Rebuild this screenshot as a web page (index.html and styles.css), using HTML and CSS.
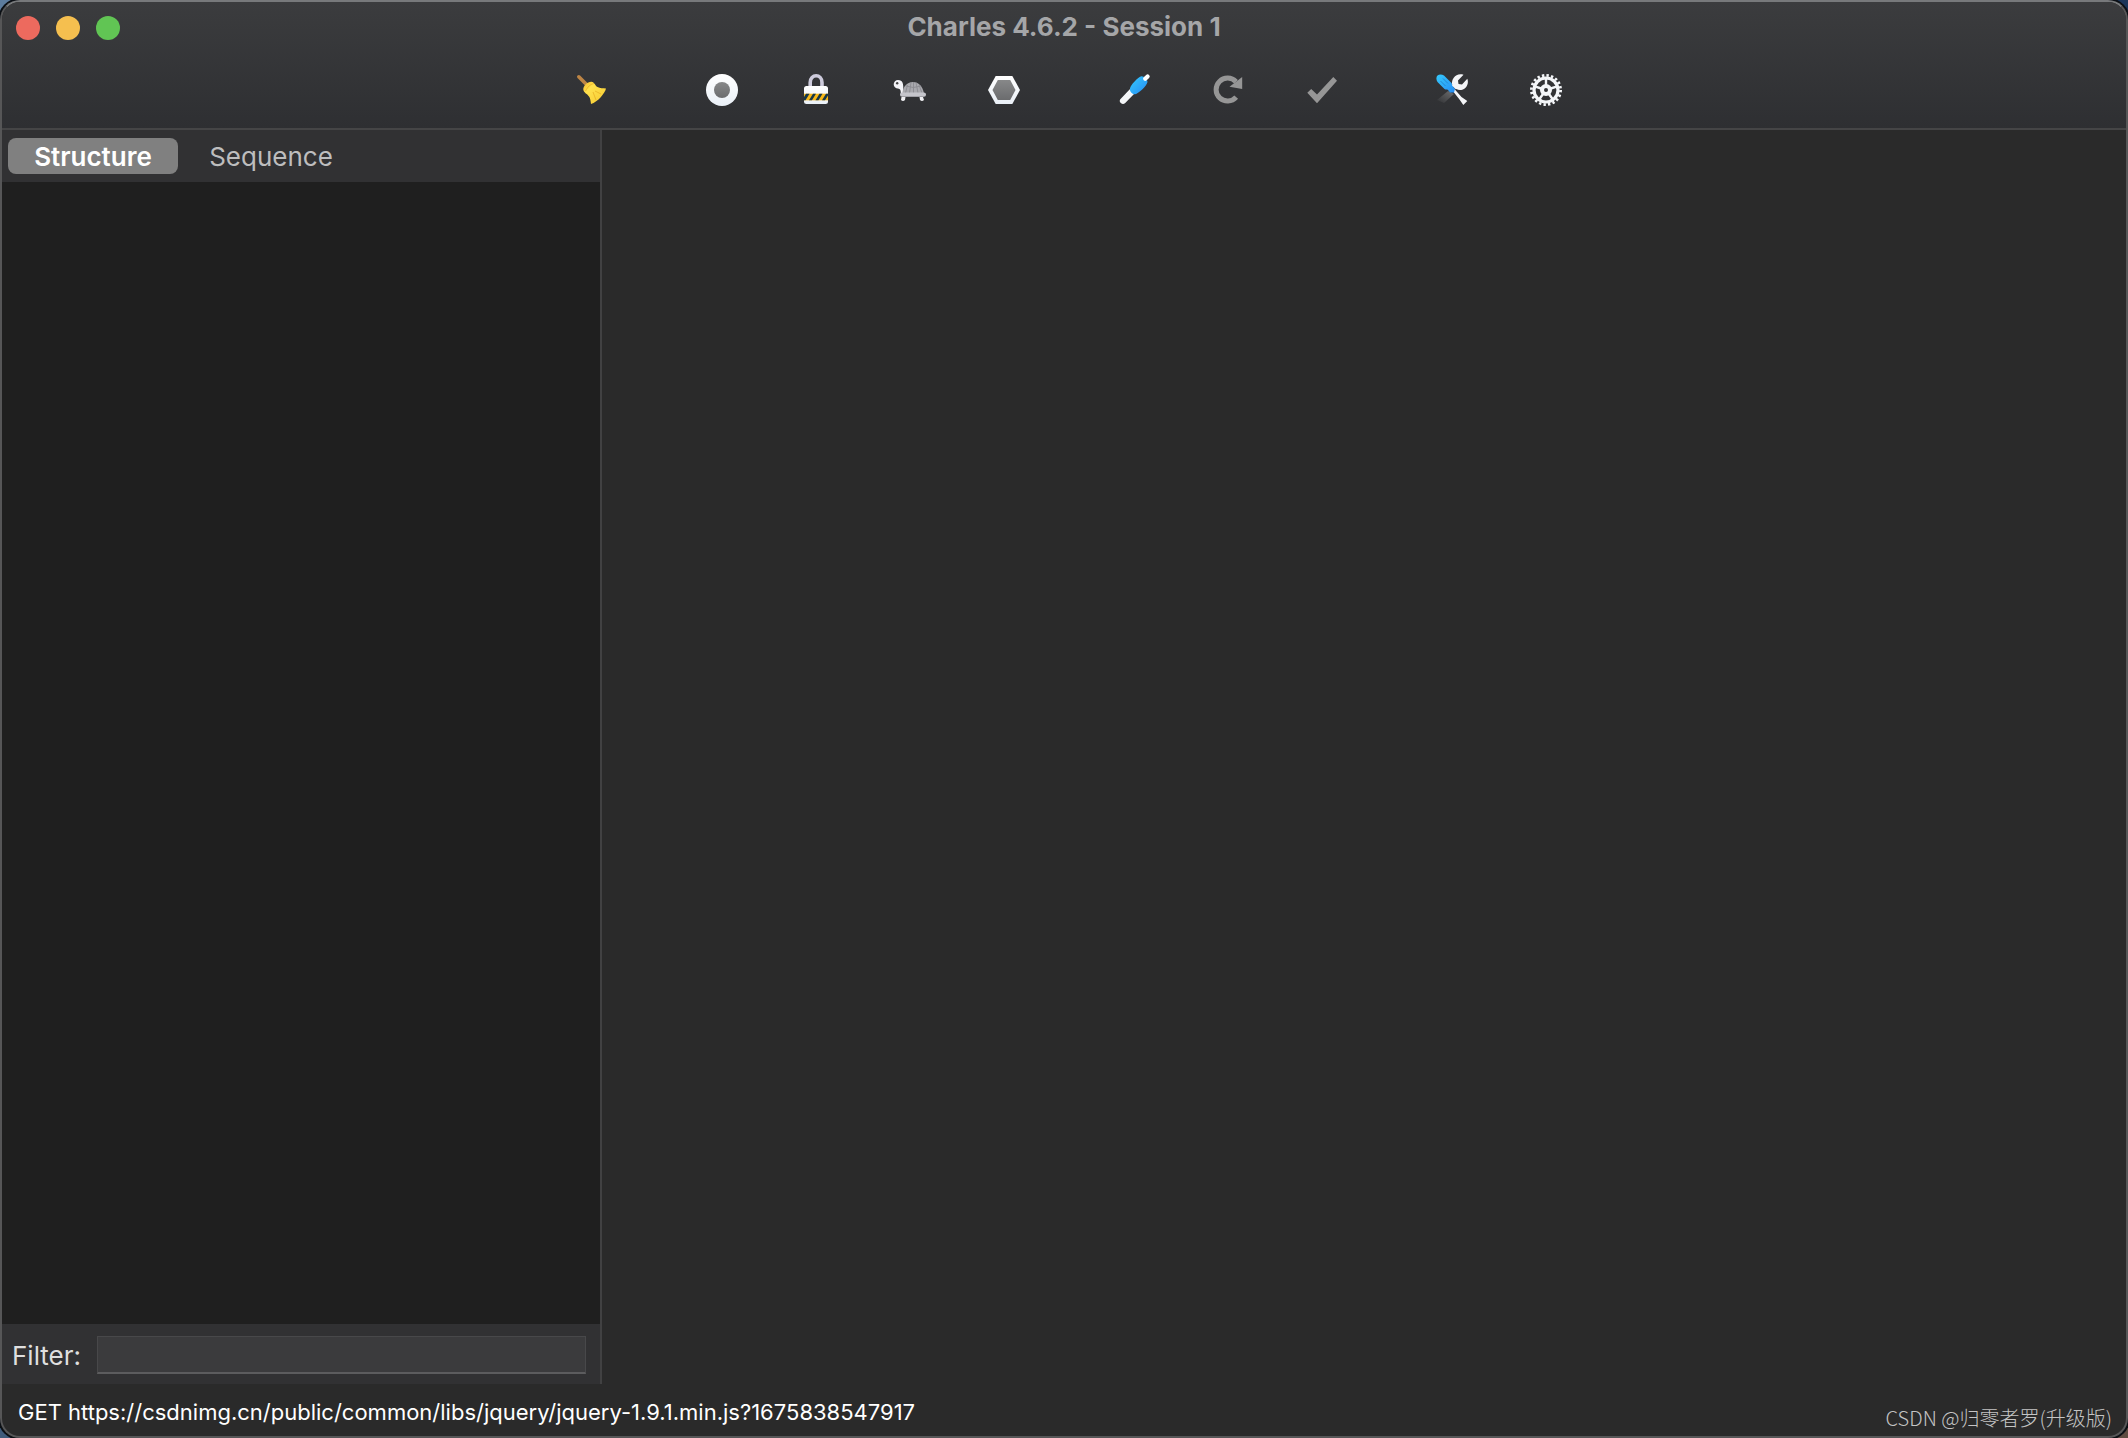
FILE: index.html
```html
<!DOCTYPE html>
<html lang="en">
<head>
<meta charset="utf-8">
<title>Charles 4.6.2 - Session 1</title>
<link rel="stylesheet" href="styles.css">
</head>
<body>
<div class="window">
  <header class="header">
    <div class="titlebar">
      <div class="lights">
        <button class="light close" aria-label="Close"></button>
        <button class="light minimize" aria-label="Minimize"></button>
        <button class="light maximize" aria-label="Zoom"></button>
      </div>
      <h1 class="title">Charles 4.6.2 - Session 1</h1>
    </div>
    <nav class="toolbar" aria-label="Toolbar">
      <div class="group">
        <button class="tool" aria-label="Clear session">
          <svg viewBox="0 0 32 32">
            <defs><linearGradient id="straw" x1="0" y1="0" x2="1" y2="1"><stop offset="0" stop-color="#f5b92c"/><stop offset=".3" stop-color="#ffe14d"/><stop offset="1" stop-color="#f6c92f"/></linearGradient></defs>
            <path d="M2.800 2.800L11 11" stroke="#bd8545" stroke-width="3.600" stroke-linecap="round"/>
            <path d="M7.300 15.500C7 12 11.500 7.500 15.500 7.700C18.500 8 19 11.500 21.500 13C24 14.500 27 14 30 14.500C29 19 22 28 15 30C14.500 27 14.500 24.500 13 22.500C11.500 20 7.800 19 7.300 15.500Z" fill="url(#straw)"/>
            <path d="M9.500 17C12 12.500 14 10.500 18 9.500M17 18L20 26M19 17L25 20" stroke="#e2a51d" stroke-width="1" fill="none" opacity=".6"/>
          </svg>
        </button>
      </div>
      <div class="group">
        <button class="tool" aria-label="Start recording">
          <svg viewBox="0 0 32 32">
            <defs>
              <linearGradient id="white" x1="0" y1="0" x2="0" y2="1"><stop offset="0" stop-color="#fff"/><stop offset="1" stop-color="#eaf0f7"/></linearGradient>
              <linearGradient id="gray" x1="0" y1="0" x2="0" y2="1"><stop offset="0" stop-color="#878889"/><stop offset="1" stop-color="#6b6c6e"/></linearGradient>
            </defs>
            <circle cx="16" cy="16" r="16" fill="url(#white)"/><circle cx="16" cy="16" r="8" fill="url(#gray)"/>
          </svg>
        </button>
        <button class="tool" aria-label="SSL proxying">
          <svg viewBox="0 0 32 32">
            <path d="M10.200 14V8.500C10.200 -.5 22 -.5 22 8.500V14" fill="none" stroke="#cdcbdc" stroke-width="3.600"/>
            <rect x="4" y="12" width="24" height="18" rx="2.500" fill="url(#white)"/>
            <rect x="4" y="19.700" width="24" height="6.600" fill="#f7b718"/>
            <path d="M6 19.700H9.500L5.500 26.300H4V23ZM13 19.700H16L12 26.300H9ZM19.500 19.700H22.500L18.500 26.300H15.500ZM26 19.700H28V21.500L25 26.300H22Z" fill="#17394a"/>
          </svg>
        </button>
        <button class="tool" aria-label="Throttling">
          <svg viewBox="0 0 32 32">
            <path d="M4 6C9 6 9.500 10 9.300 16L10 20L6.800 19.500C7 16 6 15 4 14.600A4.300 4.300 0 0 1 4 6Z" fill="#f3f3f7"/>
            <circle cx="3.200" cy="9.200" r="1.200" fill="#444"/>
            <path d="M8.300 19.500C9 12 13.500 8 19 8S28.500 12 30 19.500Z" fill="#a9a9ae"/>
            <path d="M17 8.500L15.500 19M22 8.500L24 19M19.500 8V19M12 12Q19 15 27 12M13.500 11L11.500 19M25 11L28 19" fill="none" stroke="#8b8b91" stroke-width=".9"/>
            <rect x="6" y="18.500" width="26" height="4.300" rx="2.100" fill="#c5c5cb"/>
            <path d="M7.500 23H11.500L11 26Q9 28 7 26ZM25.500 23H29L30 26Q28 28 26 26Z" fill="#efeff2"/>
          </svg>
        </button>
        <button class="tool" aria-label="Breakpoints">
          <svg viewBox="0 0 32 32">
            <path d="M7.700 2H24.300L32 16L24.300 30H7.700L0 16Z" fill="url(#white)"/><path d="M9.800 6H22.200L27.500 16L22.200 26H9.800L4.500 16Z" fill="url(#gray)"/>
          </svg>
        </button>
      </div>
      <div class="group">
        <button class="tool" aria-label="Compose">
          <svg viewBox="0 0 32 32">
            <defs><linearGradient id="blue" x1="0" y1="0" x2="1" y2="1"><stop offset="0" stop-color="#35cafc"/><stop offset="1" stop-color="#268cf5"/></linearGradient></defs>
            <path d="M5 26.800L15 16.500" stroke="#f4f6f8" stroke-width="6.200" stroke-linecap="round"/>
            <path d="M12 14.500C12.500 11 20 3 23.500 2.200C26 2 29.500 5.500 29.500 8C29 11.500 20 20.500 16.500 20.300C14 20 11.500 17.500 12 14.500Z" fill="url(#blue)"/>
            <path d="M27.200 4.800L29.600 2.400" stroke="#fff" stroke-width="4.200" stroke-linecap="round"/>
          </svg>
        </button>
        <button class="tool" aria-label="Repeat">
          <svg viewBox="0 0 32 32">
            <path d="M24.200 23.200A11.500 11.500 0 1 1 24 7.700" fill="none" stroke="#969696" stroke-width="5"/><path d="M30.200 3V15L17.500 12.700Z" fill="#969696"/>
          </svg>
        </button>
        <button class="tool" aria-label="Validate">
          <svg viewBox="0 0 32 32"><path d="M1.300 18.700L5.200 15L11 20.500L27.300 3L31 6.700L11 29.300Z" fill="#969696"/></svg>
        </button>
      </div>
      <div class="group">
        <button class="tool" aria-label="Tools">
          <svg viewBox="0 0 32 32">
            <defs><linearGradient id="fade" x1="1" y1="0" x2="0" y2="1"><stop offset="0" stop-color="#aaa" stop-opacity=".5"/><stop offset="1" stop-color="#aaa" stop-opacity="0"/></linearGradient></defs>
            <path d="M12 17L18 20L8 29L1 26Z" fill="url(#fade)"/>
            <path d="M27.500 .8L22 6.500L22.500 10L26 10.500L31.300 4.800C33 9 31 14 27 15.500C24 16.500 22 16 20.500 15L18.500 17L14 13L16.200 11C15 5 20 -1.500 27.500 .8Z" fill="#f4f5f8"/>
            <path d="M15.500 14L25 23" stroke="#303134" stroke-width="4"/>
            <path d="M16 16L18 14.500L25.500 23L31.300 27L27.300 31L23.500 25.500Z" fill="#f4f5f8"/>
            <path d="M1.500 1.500C3 0 6 0 8 1.500L15.500 9C16.500 10 15.500 11 16.500 12L19 15L18 18.500H14L12 16C11 15 10 16 8.500 15L1.500 8C0 6 0 3 1.500 1.500Z" fill="url(#blue)"/>
            <path d="M7 4.500L12 9.500M4.500 7L9.500 12" stroke="#2588d0" stroke-width="1"/>
          </svg>
        </button>
        <button class="tool" aria-label="Settings">
          <svg viewBox="0 0 32 32" fill="none" stroke="#f4f6f9">
            <circle cx="16" cy="16" r="14.600" stroke-width="2.800" stroke-dasharray="2.400 2.187"/>
            <circle cx="16" cy="16" r="12" stroke-width="3.200"/><circle cx="16" cy="16" r="4" stroke-width="4"/>
            <path d="M16 11V5M20.800 14.500L26.500 12.600M19 20L22.500 25M13 20L9.500 25M11.200 14.500L5.500 12.600" stroke-width="2.400"/>
          </svg>
        </button>
      </div>
    </nav>
  </header>
  <main class="content">
    <aside class="sidebar">
      <div class="tabs" role="tablist">
        <button class="tab active" role="tab" aria-selected="true">Structure</button>
        <button class="tab" role="tab" aria-selected="false">Sequence</button>
      </div>
      <div class="tree"></div>
      <div class="filter">
        <label class="filter-label" for="filter">Filter:</label>
        <input class="filter-input" id="filter" type="text">
      </div>
    </aside>
    <section class="detail"></section>
  </main>
  <footer class="status">
    <span class="request">GET https://csdnimg.cn/public/common/libs/jquery/jquery-1.9.1.min.js?1675838547917</span>
    <span class="credit">CSDN @归零者罗(升级版)</span>
  </footer>
</div>
</body>
</html>
```
FILE: styles.css
```css
* {
  box-sizing: border-box;
}

body {
  margin: 0;
  background:
    linear-gradient(#5c7c9e, #3f5a7a) left / 50% 100% no-repeat,
    linear-gradient(#1b355a, #5f4c42) right / 50% 100% no-repeat;
  font-family: Inter, "Liberation Sans", sans-serif;
  color: #dfdfdf;
}

button {
  padding: 0;
  border: 0;
  background: none;
  font: inherit;
  color: inherit;
}

.window {
  display: flex;
  flex-direction: column;
  min-height: 100vh;
  border: 2px solid #565657;
  border-top-color: #77797b;
  border-radius: 20px;
  background: #2a2a2a;
  box-shadow: 0 0 0 2px #0b0f14;
  overflow: hidden;
}

.header {
  height: 128px;
  border-bottom: 2px solid #454546;
  background: linear-gradient(#3b3c3e, #2e2f32);
}

.titlebar {
  display: grid;
  grid-template-columns: 1fr auto 1fr;
  align-items: start;
  height: 52px;
  padding: 0 14px;
}

.lights {
  display: flex;
  gap: 16px;
  padding-top: 14px;
}

.light {
  width: 24px;
  height: 24px;
  border-radius: 50%;
}

.close { background: #ed6a5e; }
.minimize { background: #f5bf4f; }
.maximize { background: #61c554; }

.title {
  margin: 0;
  font-size: 26px;
  line-height: 50px;
  font-weight: 700;
  color: #a5a6a8;
}

.toolbar {
  display: flex;
  justify-content: center;
  gap: 98px;
  padding: 20px 0 0 10px;
}

.group {
  display: flex;
  gap: 62px;
}

.tool {
  width: 32px;
  height: 32px;
}

.tool svg {
  display: block;
  overflow: visible;
}

.content {
  display: flex;
  flex: 1;
}

.sidebar {
  display: flex;
  flex-direction: column;
  width: 600px;
  border-right: 2px solid #414142;
  background: #313133;
}

.tabs {
  display: flex;
  gap: 8px;
  padding: 8px 6px;
}

.tab {
  width: 170px;
  height: 36px;
  border-radius: 8px;
  font-size: 26px;
  line-height: 38px;
  font-weight: 400;
  color: #bdbdbe;
}

.active {
  background: #808080;
  font-weight: 600;
  color: #fff;
}

.tree {
  flex: 1;
  background: #1f1f1f;
}

.filter {
  display: flex;
  gap: 16px;
  height: 60px;
  padding: 12px 14px 0 10px;
}

.filter-label {
  font-size: 26px;
  line-height: 40px;
}

.filter-input {
  flex: 1;
  min-width: 0;
  height: 38px;
  padding: 0 8px;
  border: 1px solid #48484a;
  border-bottom: 2px solid #5c5c5e;
  background: #3b3b3d;
  font: inherit;
  font-size: 26px;
  color: inherit;
}

.detail {
  flex: 1;
}

.status {
  display: flex;
  justify-content: space-between;
  height: 52px;
  padding: 0 14px 0 16px;
}

.request {
  font-size: 22px;
  line-height: 56px;
  color: #fff;
}

.credit {
  align-self: flex-end;
  font-family: "Noto Sans CJK SC", sans-serif;
  font-size: 20px;
  line-height: 36px;
  font-weight: 300;
  color: #c4c4c4;
}
```
